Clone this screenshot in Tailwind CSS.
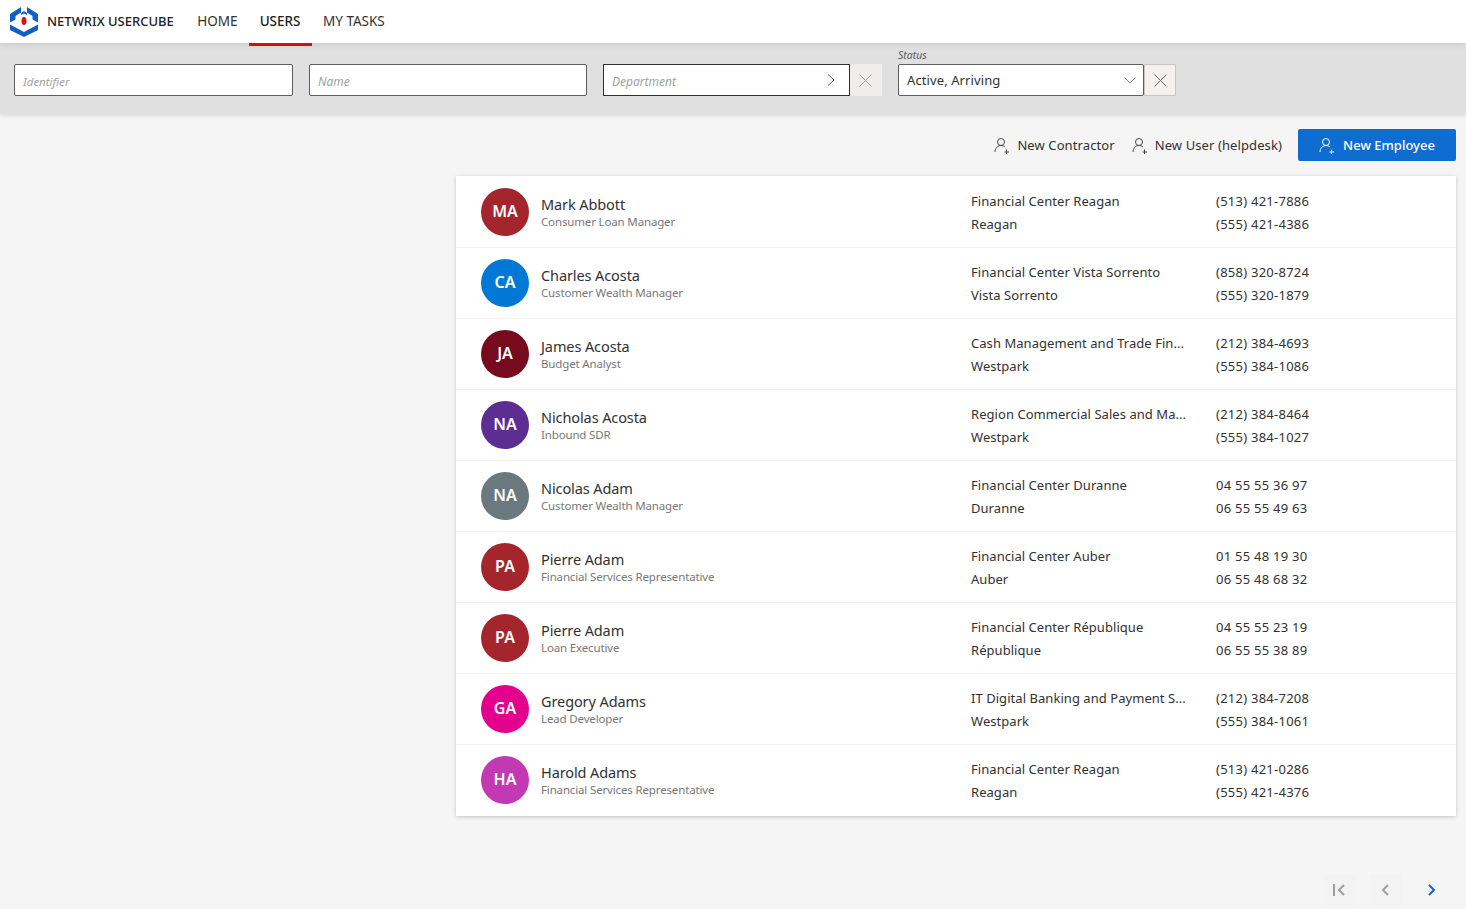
<!DOCTYPE html>
<html lang="en">
<head>
  <meta charset="UTF-8" />
  <title>Users</title>
  <script src="https://cdn.jsdelivr.net/npm/@tailwindcss/browser@4"></script>
</head>
<body class="bg-[#f5f5f5] font-['Noto_Sans',sans-serif] text-[#323130] h-[909px] overflow-hidden">
  <!-- Header -->
  <header class="relative z-20 h-[43px] bg-white flex items-center shadow-[0_1px_6px_rgba(0,0,0,0.12)]">
    <svg class="ml-[10px] w-[28px] h-[30px] mt-[1px]" viewBox="0 0 28 30">
      <path fill="#0f5fc4" d="M11 0v5.500L5.500 9v3.500L0 15.500V7zM17 0v5.500L22.500 9v3.500L28 15.500V7zM0 17.500l14 7.500 14-7.500V23l-14 7-14-7z"/>
      <path fill="#0f5fc4" d="M14 4l3 2v2l-3-1.500L11 8V6z"/>
      <ellipse cx="14" cy="14" rx="2.500" ry="4" fill="#d4141c"/>
    </svg>
    <span class="ml-[9px] text-[13px] font-medium text-[#222]">NETWRIX USERCUBE</span>
    <nav class="ml-[12.500px] flex h-full text-[13.500px]">
      <a class="px-[11px] flex items-center text-[#323130]">HOME</a>
      <a class="px-[11px] flex items-center font-medium text-[#201f1e] relative">USERS<span class="absolute left-0 right-0 -bottom-[3px] h-[3px] bg-[#d40f0f]"></span></a>
      <a class="px-[11.500px] flex items-center text-[#323130]">MY TASKS</a>
    </nav>
  </header>

  <!-- Filters -->
  <section class="h-[71px] bg-[#e0e0e0] shadow-[0_2px_4px_rgba(0,0,0,0.1)] pl-[14px] pt-[21px] flex items-start">
    <div class="w-[279px] h-[32px] bg-white border border-[#605e5c] rounded-[2px] flex items-center px-2 pt-[3px] text-[11.500px] italic text-[#a19f9d]">Identifier</div>
    <div class="ml-[16px] w-[278px] h-[32px] bg-white border border-[#605e5c] rounded-[2px] flex items-center px-2 pt-[3px] text-[12px] italic text-[#a19f9d]">Name</div>
    <div class="ml-[16px] w-[247px] h-[32px] bg-white border border-[#323130] flex items-center justify-between pl-2 pr-[14px] text-[12px] italic text-[#a19f9d]">
      <span class="pt-[3px]">Department</span>
      <svg class="w-[8px] h-[12px]" viewBox="0 0 8 12" fill="none" stroke="#605e5c"><path d="M1 .5 7 6l-6 5.500"/></svg>
    </div>
    <div class="w-[32px] h-[32px] bg-[#efeeed] flex items-center justify-center">
      <svg class="w-[13px] h-[13px] -ml-[1px]" viewBox="0 0 13 13" fill="none" stroke="#a19f9d"><path d="M.5.5l12 12M12.500.5l-12 12"/></svg>
    </div>
    <div class="ml-[16px] relative">
      <label class="absolute left-0 -top-[16px] text-[10.500px] italic text-[#605e5c]">Status</label>
      <div class="w-[246px] h-[32px] bg-white border border-[#605e5c] rounded-[2px] flex items-center justify-between pl-2 pr-[7px] text-[13px] tracking-[0.1px] text-[#323130]">
        <span class="pt-[1px]">Active, Arriving</span>
        <svg class="w-[12px] h-[7px]" viewBox="0 0 12 7" fill="none" stroke="#8a8886"><path d="M.5.5 6 6 11.500.5"/></svg>
      </div>
    </div>
    <div class="w-[32px] h-[32px] bg-[#f3f2f1] border border-[#c8c6c4] flex items-center justify-center">
      <svg class="w-[13px] h-[13px]" viewBox="0 0 13 13" fill="none" stroke="#605e5c"><path d="M.5.5l12 12M12.500.5l-12 12"/></svg>
    </div>
  </section>

  <!-- Actions -->
  <div class="h-[62px] flex items-start justify-end pr-[10px] pt-[15px] text-[13px] tracking-[0.1px]">
    <button class="h-[32px] pt-[2px] flex items-center mr-[17px] text-[#323130]">
      <svg class="w-[16px] h-[18px] mr-[7px]" viewBox="0 0 16 18" fill="none" stroke="#494745"><circle cx="7" cy="5" r="3.500"/><path d="M1 15c0-3.500 2.500-6.500 6-6.500 1.500 0 3 .6 4 1.500M12.500 12.500v4.500M10.500 15h4.500"/></svg>
      New Contractor
    </button>
    <button class="h-[32px] pt-[2px] flex items-center mr-[16px] text-[#323130]">
      <svg class="w-[16px] h-[18px] mr-[7px]" viewBox="0 0 16 18" fill="none" stroke="#494745"><circle cx="7" cy="5" r="3.500"/><path d="M1 15c0-3.500 2.500-6.500 6-6.500 1.500 0 3 .6 4 1.500M12.500 12.500v4.500M10.500 15h4.500"/></svg>
      New User (helpdesk)
    </button>
    <button class="w-[158px] h-[32px] pt-[2px] bg-[#0f6cd0] rounded-[2px] flex items-center justify-center text-white font-medium tracking-normal">
      <svg class="w-[16px] h-[18px] mr-[8px]" viewBox="0 0 16 18" fill="none" stroke="#fff"><circle cx="7" cy="5" r="3.500"/><path d="M1 15c0-3.500 2.500-6.500 6-6.500 1.500 0 3 .6 4 1.500M12.500 12.500v4.500M10.500 15h4.500"/></svg>
      New Employee
    </button>
  </div>

  <!-- User list -->
  <main class="ml-[456px] mr-[10px] pt-[1px] bg-white shadow-[0_1px_4px_rgba(0,0,0,0.2)]">
    <div class="h-[71px] border-b border-[#f3f2f1] flex items-center pl-[25px]">
      <div class="w-[48px] h-[48px] pb-[2px] rounded-full bg-[#a4262c] text-white font-semibold text-[16px] flex items-center justify-center">MA</div>
      <div class="ml-[12px] w-[430px]"><div class="text-[14.500px] tracking-[-0.1px] leading-[19px] text-[#323130]">Mark Abbott</div><div class="text-[11.500px] tracking-[-0.15px] leading-[16px] text-[#797775]">Consumer Loan Manager</div></div>
      <div class="w-[245px] mt-[2px] text-[13px] tracking-[0.05px] leading-[23px] text-[#323130]"><div>Financial Center Reagan</div><div>Reagan</div></div>
      <div class="mt-[2px] text-[13px] tracking-[0.25px] leading-[23px] text-[#323130]"><div>(513) 421-7886</div><div>(555) 421-4386</div></div>
    </div>
    <div class="h-[71px] border-b border-[#f3f2f1] flex items-center pl-[25px]">
      <div class="w-[48px] h-[48px] pb-[2px] rounded-full bg-[#0078d4] text-white font-semibold text-[16px] flex items-center justify-center">CA</div>
      <div class="ml-[12px] w-[430px]"><div class="text-[14.500px] tracking-[-0.1px] leading-[19px] text-[#323130]">Charles Acosta</div><div class="text-[11.500px] tracking-[-0.15px] leading-[16px] text-[#797775]">Customer Wealth Manager</div></div>
      <div class="w-[245px] mt-[2px] text-[13px] tracking-[0.05px] leading-[23px] text-[#323130]"><div>Financial Center Vista Sorrento</div><div>Vista Sorrento</div></div>
      <div class="mt-[2px] text-[13px] tracking-[0.25px] leading-[23px] text-[#323130]"><div>(858) 320-8724</div><div>(555) 320-1879</div></div>
    </div>
    <div class="h-[71px] border-b border-[#f3f2f1] flex items-center pl-[25px]">
      <div class="w-[48px] h-[48px] pb-[2px] rounded-full bg-[#750b1c] text-white font-semibold text-[16px] flex items-center justify-center">JA</div>
      <div class="ml-[12px] w-[430px]"><div class="text-[14.500px] tracking-[-0.1px] leading-[19px] text-[#323130]">James Acosta</div><div class="text-[11.500px] tracking-[-0.15px] leading-[16px] text-[#797775]">Budget Analyst</div></div>
      <div class="w-[245px] mt-[2px] text-[13px] tracking-[0.05px] leading-[23px] text-[#323130]"><div>Cash Management and Trade Fin...</div><div>Westpark</div></div>
      <div class="mt-[2px] text-[13px] tracking-[0.25px] leading-[23px] text-[#323130]"><div>(212) 384-4693</div><div>(555) 384-1086</div></div>
    </div>
    <div class="h-[71px] border-b border-[#f3f2f1] flex items-center pl-[25px]">
      <div class="w-[48px] h-[48px] pb-[2px] rounded-full bg-[#5c2e91] text-white font-semibold text-[16px] flex items-center justify-center">NA</div>
      <div class="ml-[12px] w-[430px]"><div class="text-[14.500px] tracking-[-0.1px] leading-[19px] text-[#323130]">Nicholas Acosta</div><div class="text-[11.500px] tracking-[-0.15px] leading-[16px] text-[#797775]">Inbound SDR</div></div>
      <div class="w-[245px] mt-[2px] text-[13px] tracking-[0.05px] leading-[23px] text-[#323130]"><div>Region Commercial Sales and Ma...</div><div>Westpark</div></div>
      <div class="mt-[2px] text-[13px] tracking-[0.25px] leading-[23px] text-[#323130]"><div>(212) 384-8464</div><div>(555) 384-1027</div></div>
    </div>
    <div class="h-[71px] border-b border-[#f3f2f1] flex items-center pl-[25px]">
      <div class="w-[48px] h-[48px] pb-[2px] rounded-full bg-[#69797e] text-white font-semibold text-[16px] flex items-center justify-center">NA</div>
      <div class="ml-[12px] w-[430px]"><div class="text-[14.500px] tracking-[-0.1px] leading-[19px] text-[#323130]">Nicolas Adam</div><div class="text-[11.500px] tracking-[-0.15px] leading-[16px] text-[#797775]">Customer Wealth Manager</div></div>
      <div class="w-[245px] mt-[2px] text-[13px] tracking-[0.05px] leading-[23px] text-[#323130]"><div>Financial Center Duranne</div><div>Duranne</div></div>
      <div class="mt-[2px] text-[13px] tracking-[0.25px] leading-[23px] text-[#323130]"><div>04 55 55 36 97</div><div>06 55 55 49 63</div></div>
    </div>
    <div class="h-[71px] border-b border-[#f3f2f1] flex items-center pl-[25px]">
      <div class="w-[48px] h-[48px] pb-[2px] rounded-full bg-[#a4262c] text-white font-semibold text-[16px] flex items-center justify-center">PA</div>
      <div class="ml-[12px] w-[430px]"><div class="text-[14.500px] tracking-[-0.1px] leading-[19px] text-[#323130]">Pierre Adam</div><div class="text-[11.500px] tracking-[-0.15px] leading-[16px] text-[#797775]">Financial Services Representative</div></div>
      <div class="w-[245px] mt-[2px] text-[13px] tracking-[0.05px] leading-[23px] text-[#323130]"><div>Financial Center Auber</div><div>Auber</div></div>
      <div class="mt-[2px] text-[13px] tracking-[0.25px] leading-[23px] text-[#323130]"><div>01 55 48 19 30</div><div>06 55 48 68 32</div></div>
    </div>
    <div class="h-[71px] border-b border-[#f3f2f1] flex items-center pl-[25px]">
      <div class="w-[48px] h-[48px] pb-[2px] rounded-full bg-[#a4262c] text-white font-semibold text-[16px] flex items-center justify-center">PA</div>
      <div class="ml-[12px] w-[430px]"><div class="text-[14.500px] tracking-[-0.1px] leading-[19px] text-[#323130]">Pierre Adam</div><div class="text-[11.500px] tracking-[-0.15px] leading-[16px] text-[#797775]">Loan Executive</div></div>
      <div class="w-[245px] mt-[2px] text-[13px] tracking-[0.05px] leading-[23px] text-[#323130]"><div>Financial Center République</div><div>République</div></div>
      <div class="mt-[2px] text-[13px] tracking-[0.25px] leading-[23px] text-[#323130]"><div>04 55 55 23 19</div><div>06 55 55 38 89</div></div>
    </div>
    <div class="h-[71px] border-b border-[#f3f2f1] flex items-center pl-[25px]">
      <div class="w-[48px] h-[48px] pb-[2px] rounded-full bg-[#e3008c] text-white font-semibold text-[16px] flex items-center justify-center">GA</div>
      <div class="ml-[12px] w-[430px]"><div class="text-[14.500px] tracking-[-0.1px] leading-[19px] text-[#323130]">Gregory Adams</div><div class="text-[11.500px] tracking-[-0.15px] leading-[16px] text-[#797775]">Lead Developer</div></div>
      <div class="w-[245px] mt-[2px] text-[13px] tracking-[0.05px] leading-[23px] text-[#323130]"><div>IT Digital Banking and Payment S...</div><div>Westpark</div></div>
      <div class="mt-[2px] text-[13px] tracking-[0.25px] leading-[23px] text-[#323130]"><div>(212) 384-7208</div><div>(555) 384-1061</div></div>
    </div>
    <div class="h-[71px] flex items-center pl-[25px] pb-[1px]">
      <div class="w-[48px] h-[48px] pb-[2px] rounded-full bg-[#c239b3] text-white font-semibold text-[16px] flex items-center justify-center">HA</div>
      <div class="ml-[12px] w-[430px]"><div class="text-[14.500px] tracking-[-0.1px] leading-[19px] text-[#323130]">Harold Adams</div><div class="text-[11.500px] tracking-[-0.15px] leading-[16px] text-[#797775]">Financial Services Representative</div></div>
      <div class="w-[245px] mt-[2px] text-[13px] tracking-[0.05px] leading-[23px] text-[#323130]"><div>Financial Center Reagan</div><div>Reagan</div></div>
      <div class="mt-[2px] text-[13px] tracking-[0.25px] leading-[23px] text-[#323130]"><div>(513) 421-0286</div><div>(555) 421-4376</div></div>
    </div>
  </main>

  <!-- Pagination -->
  <div class="mt-[58px] flex justify-end pr-[18px] gap-[14px]">
    <button class="w-[32px] h-[32px] bg-[#f3f3f3] flex items-center justify-center">
      <svg class="w-[14px] h-[12px] -ml-[2px]" viewBox="0 0 14 12" fill="none" stroke="#a19f9d" stroke-width="2"><path d="M2 0v12M12 1 7 6l5 5"/></svg>
    </button>
    <button class="w-[32px] h-[32px] bg-[#f3f3f3] flex items-center justify-center">
      <svg class="w-[8px] h-[12px] -ml-[2px]" viewBox="0 0 8 12" fill="none" stroke="#a19f9d" stroke-width="2"><path d="M7 1 2 6l5 5"/></svg>
    </button>
    <button class="w-[32px] h-[32px] flex items-center justify-center">
      <svg class="w-[8px] h-[12px]" viewBox="0 0 8 12" fill="none" stroke="#1565c0" stroke-width="2"><path d="m1 1 5 5-5 5"/></svg>
    </button>
  </div>
</body>
</html>
